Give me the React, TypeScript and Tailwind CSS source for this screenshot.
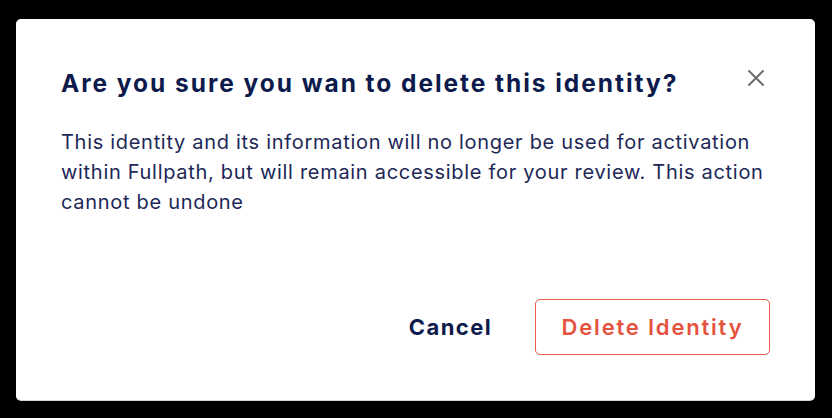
import React from "react";

export default function App() {
  return (
    <div className="w-[832px] h-[418px] bg-black pt-[19px] pl-[16px]" style={{ fontFamily: "Inter, 'Noto Sans', sans-serif" }}>
      <div className="w-[799px] h-[381px] bg-white rounded-[5px] shadow-[0_1px_0_#d4d6dc] flex flex-col px-[45px] pt-[48px] pb-[45px]">
        <div className="flex items-start justify-between">
          <h2 className="text-[24.5px] leading-[32px] font-bold text-[#0d1b4c] tracking-[1.95px]">
            Are you sure you wan to delete this identity?
          </h2>
          <button className="mt-[2px] mr-[5px] text-[#6f6f6f]" aria-label="Close">
            <svg width="18" height="18" viewBox="0 0 18 18" fill="none" stroke="currentColor" strokeWidth="2" strokeLinecap="round">
              <path d="M2 2 L16 16 M16 2 L2 16" />
            </svg>
          </button>
        </div>
        <p className="mt-[28px] text-[20px] leading-[30px] text-[#1d2857] tracking-[0.7px]">
          This identity and its information will no longer be used for activation within Fullpath, but will remain accessible for your review. This action cannot be undone
        </p>
        <div className="mt-auto flex items-center justify-end gap-[43px]">
          <button className="text-[22px] font-bold text-[#0d1b4c] tracking-[1.4px]">Cancel</button>
          <button className="w-[235px] h-[56px] border border-[#e8584b] rounded-[5px] text-[22px] font-semibold text-[#e5533f] tracking-[1.8px]">
            Delete Identity
          </button>
        </div>
      </div>
    </div>
  );
}
